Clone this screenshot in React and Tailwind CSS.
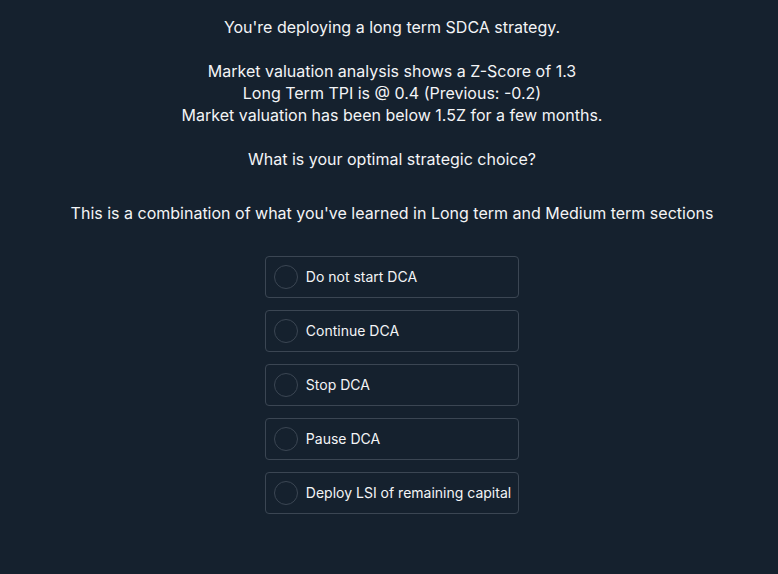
import React from "react";

const options = [
  "Do not start DCA",
  "Continue DCA",
  "Stop DCA",
  "Pause DCA",
  "Deploy LSI of remaining capital",
];

export default function App() {
  return (
    <div
      className="w-[778px] h-[574px] bg-[#15212e] text-[#f3f4f6] flex flex-col items-center pt-[16px] pl-[6px]"
      style={{ fontFamily: "Inter, 'Noto Sans', sans-serif" }}
    >
      <div className="text-[16px] leading-[22px] text-center">
        <p>You're deploying a long term SDCA strategy.</p>
        <p>&nbsp;</p>
        <p>Market valuation analysis shows a Z-Score of 1.3</p>
        <p>Long Term TPI is @ 0.4 (Previous: -0.2)</p>
        <p>Market valuation has been below 1.5Z for a few months.</p>
        <p>&nbsp;</p>
        <p>What is your optimal strategic choice?</p>
      </div>
      <p className="text-[16px] leading-[22px] text-center mt-[32px]">
        This is a combination of what you've learned in Long term and Medium term sections
      </p>
      <div className="flex flex-col gap-[12px] mt-[32px] w-fit">
        {options.map((o) => (
          <div
            key={o}
            className="flex items-center h-[42px] border border-[#3b4653] rounded-[4px] pl-[8px] pr-[7px] gap-[8px]"
          >
            <span className="w-[24px] h-[24px] rounded-full border border-[#3b4653] shrink-0" />
            <span className="text-[14px] leading-[20px]">{o}</span>
          </div>
        ))}
      </div>
    </div>
  );
}
